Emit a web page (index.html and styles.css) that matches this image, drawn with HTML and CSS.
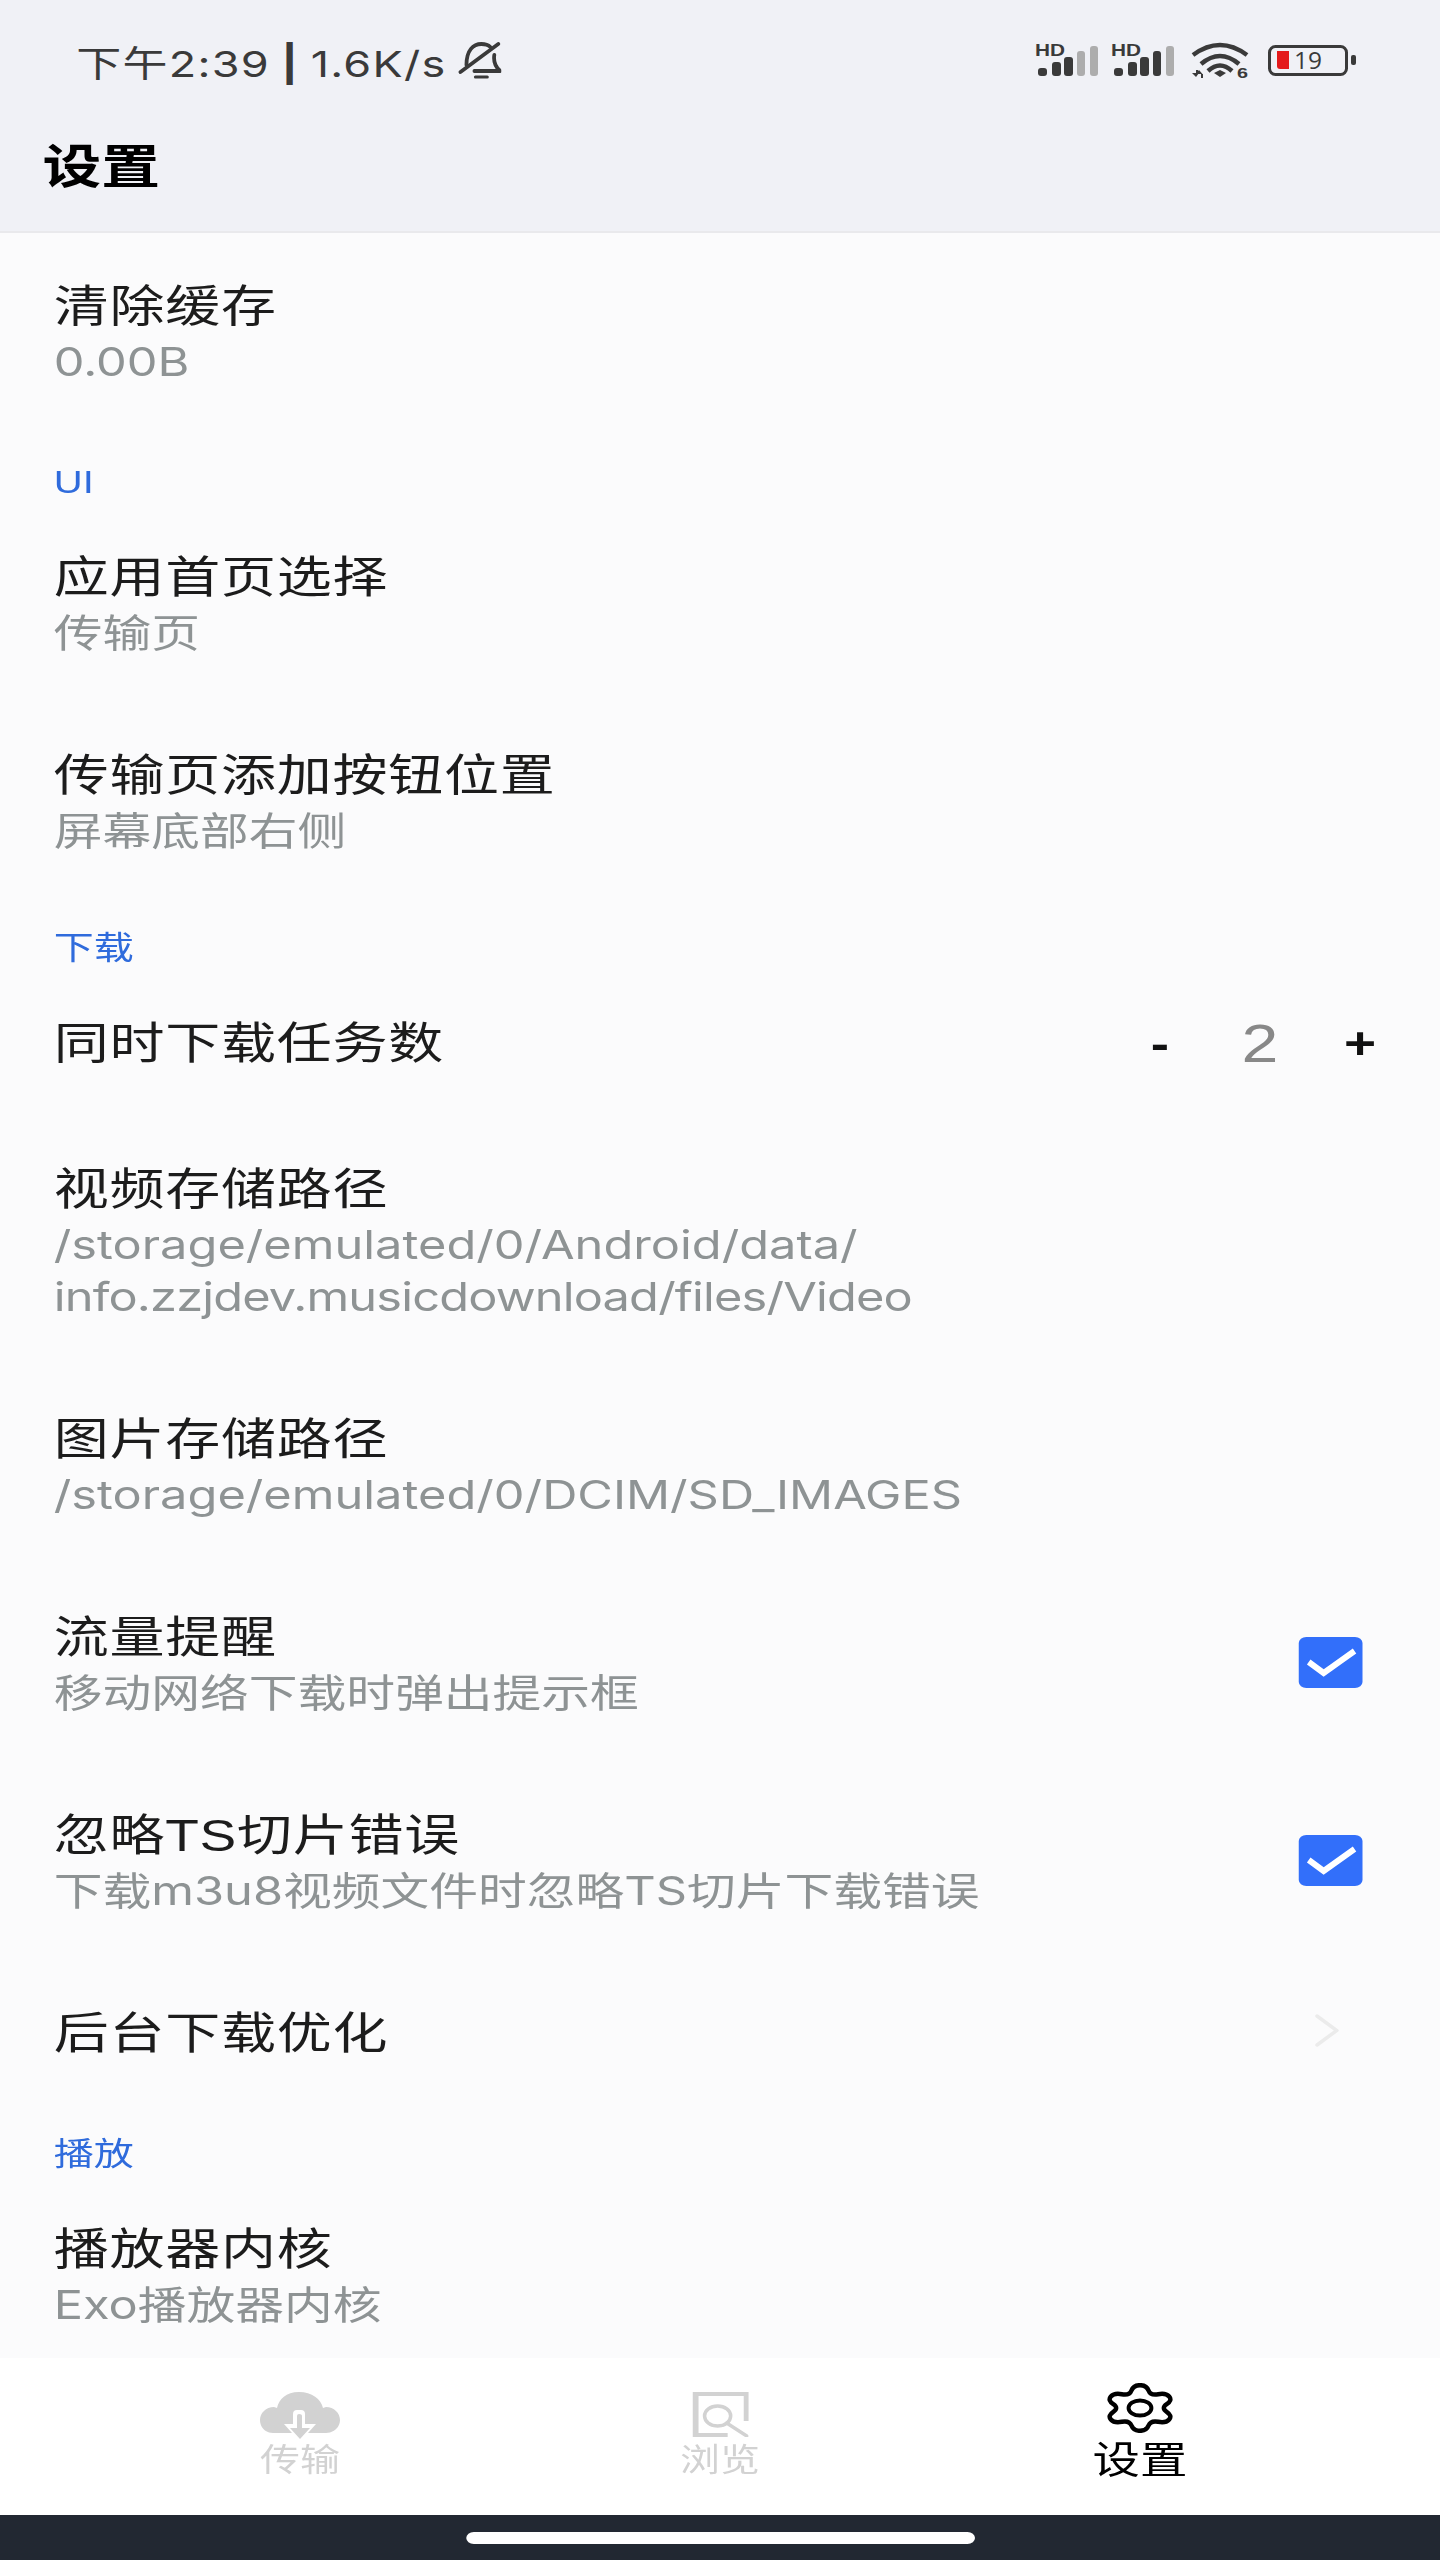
FILE: index.html
```html
<!DOCTYPE html>
<html lang="zh-CN">

<head>
    <meta charset="UTF-8">
    <meta name="viewport" content="width=device-width, initial-scale=1.0">
    <title>设置</title>
    <link rel="stylesheet" href="styles.css">
</head>

<body>
    <div class="screen">
        <div class="top">
            <div class="status">
                <span class="time">下午2:39 <b>|</b> 1.6K/s</span>
                <svg class="bell" viewBox="0 0 44 38" preserveAspectRatio="none">
                    <path d="M9 23C9 8 16 2 24 2c4 0 7 1 9 3" fill="none" stroke="#3a3a3a" stroke-width="3.800" stroke-linecap="round"/>
                    <path d="M37 13c-1 7 1 12 6 16H17" fill="none" stroke="#3a3a3a" stroke-width="3.800" stroke-linecap="round" stroke-linejoin="round"/>
                    <path d="M18 35h12" stroke="#3a3a3a" stroke-width="3" stroke-linecap="round"/>
                    <path d="M3 30L41 2" stroke="#3a3a3a" stroke-width="3.800" stroke-linecap="round"/>
                </svg>
                <svg class="indicators" viewBox="1030 40 330 45" preserveAspectRatio="none">
                    <text x="1035" y="57" class="hd" textLength="30" lengthAdjust="spacingAndGlyphs">HD</text>
                    <rect x="1038" y="69" width="9" height="8" rx="3" fill="#3a3a3a"/>
                    <rect x="1052" y="63" width="9" height="14" rx="3" fill="#3a3a3a"/>
                    <rect x="1064" y="58" width="9" height="19" rx="3" fill="#3a3a3a"/>
                    <rect x="1077" y="52" width="8" height="25" rx="3" fill="#adadad"/>
                    <rect x="1090" y="47" width="8" height="30" rx="3" fill="#adadad"/>

                    <text x="1111" y="57" class="hd" textLength="30" lengthAdjust="spacingAndGlyphs">HD</text>
                    <rect x="1114" y="69" width="9" height="8" rx="3" fill="#3a3a3a"/>
                    <rect x="1128" y="63" width="9" height="14" rx="3" fill="#3a3a3a"/>
                    <rect x="1140" y="58" width="9" height="19" rx="3" fill="#3a3a3a"/>
                    <rect x="1153" y="52" width="8" height="25" rx="3" fill="#3a3a3a"/>
                    <rect x="1166" y="47" width="8" height="30" rx="3" fill="#adadad"/>

                    <path d="M1193 56Q1220 36 1247 56M1201 65Q1220 49 1239 65M1208 72Q1220 61 1232 72" fill="none" stroke="#3a3a3a" stroke-width="4.500"/>
                    <path d="M1214 74l6-3 6 3-6 4z" fill="#3a3a3a"/>
                    <path d="M1192 74h7l-3 4zM1199 71l3.500 4h-7zM1196 71h2v4h-2zM1201 75h2v4h-2z" fill="#3a3a3a"/>
                    <text x="1237" y="79" class="wifi-six" textLength="11" lengthAdjust="spacingAndGlyphs">6</text>

                    <rect x="1269.500" y="47.500" width="77" height="28" rx="6" fill="none" stroke="#3a3a3a" stroke-width="3"/>
                    <path d="M1277 52h12v18h-9a3 3 0 0 1-3-3z" fill="#e41a1c"/>
                    <rect x="1351" y="56" width="5" height="10" rx="2" fill="#3a3a3a"/>
                    <text x="1294" y="70" class="level" textLength="28" lengthAdjust="spacingAndGlyphs">19</text>
                </svg>
            </div>
            <div class="page-title">设置</div>
        </div>

        <div class="list">
            <div class="row first">
                <div class="text">
                    <div class="name">清除缓存</div>
                    <div class="sub">0.00B</div>
                </div>
            </div>

            <div class="label">UI</div>
            <div class="row">
                <div class="text">
                    <div class="name">应用首页选择</div>
                    <div class="sub">传输页</div>
                </div>
            </div>
            <div class="row">
                <div class="text">
                    <div class="name">传输页添加按钮位置</div>
                    <div class="sub">屏幕底部右侧</div>
                </div>
            </div>

            <div class="label">下载</div>
            <div class="row">
                <div class="text">
                    <div class="name">同时下载任务数</div>
                </div>
                <div class="stepper">
                    <span class="step">-</span>
                    <span class="count">2</span>
                    <span class="step">+</span>
                </div>
            </div>
            <div class="row">
                <div class="text">
                    <div class="name">视频存储路径</div>
                    <div class="sub">/storage/emulated/0/Android/data/<br><span class="tight">info.zzjdev.musicdownload/files/Video</span></div>
                </div>
            </div>
            <div class="row">
                <div class="text">
                    <div class="name">图片存储路径</div>
                    <div class="sub">/storage/emulated/0/DCIM/SD_IMAGES</div>
                </div>
            </div>
            <div class="row">
                <div class="text">
                    <div class="name">流量提醒</div>
                    <div class="sub">移动网络下载时弹出提示框</div>
                </div>
                <div class="check">
                    <svg viewBox="0 0 64 51" preserveAspectRatio="none">
                        <path d="M10 25l15 11 31-22" fill="none" stroke="#fff" stroke-width="6"/>
                    </svg>
                </div>
            </div>
            <div class="row">
                <div class="text">
                    <div class="name">忽略TS切片错误</div>
                    <div class="sub">下载m3u8视频文件时忽略TS切片下载错误</div>
                </div>
                <div class="check">
                    <svg viewBox="0 0 64 51" preserveAspectRatio="none">
                        <path d="M10 25l15 11 31-22" fill="none" stroke="#fff" stroke-width="6"/>
                    </svg>
                </div>
            </div>
            <div class="row">
                <div class="text">
                    <div class="name">后台下载优化</div>
                </div>
                <svg class="chevron" viewBox="0 0 24 33" preserveAspectRatio="none">
                    <path d="M2 2l20 14.500L2 31" fill="none" stroke="#ebebeb" stroke-width="3.500" stroke-linecap="round"/>
                </svg>
            </div>

            <div class="label">播放</div>
            <div class="row">
                <div class="text">
                    <div class="name">播放器内核</div>
                    <div class="sub">Exo播放器内核</div>
                </div>
            </div>
        </div>

        <div class="tabs">
            <div class="tab">
                <svg class="tab-icon cloud" viewBox="0 0 80 50" preserveAspectRatio="none">
                    <path d="M13 41C5 41 0 35 0 28c0-7 6-13 14-13l3 1C19 7 26 0 39 0c13 0 22 7 24 16l3-1c8 0 14 6 14 13 0 7-6 13-14 13z" fill="#d2d2d2"/>
                    <path d="M33 32V22q0-4 4-4h4q4 0 4 4v10h11L40 50 24 32z" fill="#fff"/>
                    <path d="M37 36V24q0-2 2-2h0q3 0 3 2v12h8L40 47 30 36z" fill="#d2d2d2"/>
                </svg>
                <span>传输</span>
            </div>
            <div class="tab">
                <svg class="tab-icon browse" viewBox="0 0 56 45" preserveAspectRatio="none">
                    <path d="M0 0h56v29h-5V4H6v37h29v4H0z" fill="#d2d2d2"/>
                    <ellipse cx="25" cy="24" rx="13" ry="10" fill="none" stroke="#d2d2d2" stroke-width="3.500"/>
                    <path d="M34 31l20 13" stroke="#d2d2d2" stroke-width="3.500" stroke-linecap="round"/>
                </svg>
                <span>浏览</span>
            </div>
            <div class="tab active">
                <svg class="tab-icon gear" viewBox="0 0 68 50" preserveAspectRatio="none">
                    <path d="M34 2.200Q40.600 2.200 42.600 7.450 44.600 12.700 52.350 11.250 60.100 9.800 63.400 13.600 66.700 17.400 60.900 21.200 55.100 25 60.900 28.800 66.700 32.600 63.400 36.400 60.100 40.200 52.350 38.750 44.600 37.300 42.600 42.550 40.600 47.800 34 47.800 27.400 47.800 25.400 42.550 23.400 37.300 15.650 38.750 7.900 40.200 4.600 36.400 1.300 32.600 7.100 28.800 12.900 25 7.100 21.200 1.300 17.400 4.600 13.600 7.900 9.800 15.650 11.250 23.400 12.700 25.400 7.450 27.400 2.200 34 2.200z" fill="none" stroke="#000" stroke-width="4.500" stroke-linejoin="round"/>
                    <ellipse cx="34" cy="25" rx="11.500" ry="7.500" fill="none" stroke="#000" stroke-width="4"/>
                </svg>
                <span>设置</span>
            </div>
        </div>

        <div class="home-bar">
            <div class="pill"></div>
        </div>
    </div>
</body>

</html>
```

FILE: styles.css
```css
* {
    padding: 0;
    margin: 0;
    box-sizing: border-box;
}

body {
    width: 1440px;
    height: 2560px;
    overflow: hidden;
    background-color: #fbfbfc;
}

/* the app is laid out at 1152 wide and stretched across the window */
.screen {
    width: 1152px;
    height: 2560px;
    transform: scaleX(1.25);
    transform-origin: 0 0;
    display: flex;
    flex-direction: column;
    font-family: "Liberation Sans", "Noto Sans CJK SC", sans-serif;
    color: #1c1c1c;
}

.top {
    height: 233px;
    flex: none;
    background-color: #f0f1f6;
    border-bottom: 2px solid #e9e9ec;
}

.status {
    height: 122px;
    padding: 0 64px 0 61px;
    display: flex;
    align-items: center;
    color: #3a3a3a;
}

.time {
    font-family: Inter, "Noto Sans CJK SC", sans-serif;
    font-size: 36px;
    letter-spacing: 1px;
    word-spacing: -2px;
    white-space: nowrap;
}

.bell {
    width: 35px;
    height: 38px;
    margin-left: 9px;
}

.indicators {
    width: 264px;
    height: 45px;
    margin-left: auto;
}

.hd {
    font: bold 16px "Liberation Sans", sans-serif;
    fill: #3a3a3a;
}

.wifi-six {
    font: bold 15px "Liberation Sans", sans-serif;
    fill: #3a3a3a;
}

.level {
    font: 24px "Open Sans", sans-serif;
    fill: #3a3a3a;
}

.page-title {
    padding: 2px 0 0 34px;
    font-size: 47px;
    font-weight: bold;
    line-height: 86px;
    color: #000;
}

.list {
    flex: 1;
    overflow: hidden;
}

.label {
    height: 70px;
    padding: 31px 0 0 43px;
    font-size: 32px;
    line-height: 34px;
    color: #2f6bdc;
}

.row {
    display: flex;
    align-items: center;
    padding: 44px 24px 43px 43px;
}

.row.first {
    padding-bottom: 46px;
}

.text {
    flex: 1;
}

.name {
    font-size: 44px;
    letter-spacing: 0.6px;
    line-height: 59px;
}

.sub {
    font-family: Inter, "Noto Sans CJK SC", sans-serif;
    font-size: 39px;
    line-height: 52px;
    color: #8e9394;
}

.tight {
    letter-spacing: -0.67px;
}

.stepper {
    display: flex;
    align-items: center;
}

.stepper span {
    width: 80px;
    text-align: center;
    line-height: 57px;
}

.step {
    font-size: 44px;
    font-weight: bold;
    color: #111;
}

.count {
    font-size: 53px;
    color: #888;
}

.check {
    width: 51px;
    height: 51px;
    margin: 0 38px 3px 0;
    border-radius: 6px;
    background-color: #326ffa;
}

.check svg {
    display: block;
    width: 100%;
    height: 100%;
}

.chevron {
    width: 19px;
    height: 33px;
    margin: 0 57px 6px 0;
}

.tabs {
    height: 157px;
    flex: none;
    display: flex;
    padding: 0 72px;
    background-color: #fff;
}

.tab {
    flex: 1;
    display: flex;
    flex-direction: column;
    align-items: center;
    justify-content: flex-end;
    padding-bottom: 37px;
    font-size: 32px;
    line-height: 36px;
    color: #d2d2d2;
}

.tab.active {
    font-size: 38px;
    color: #000;
}

.tab-icon {
    display: block;
}

.cloud {
    width: 64px;
    height: 50px;
}

.browse {
    width: 45px;
    height: 45px;
    margin-bottom: 5px;
}

.gear {
    width: 54px;
    height: 50px;
    margin-bottom: 9px;
}

.home-bar {
    height: 45px;
    flex: none;
    display: flex;
    justify-content: center;
    padding-top: 17px;
    background-color: #222832;
}

.pill {
    width: 407px;
    height: 12px;
    border-radius: 6px;
    background-color: #fff;
}
```
